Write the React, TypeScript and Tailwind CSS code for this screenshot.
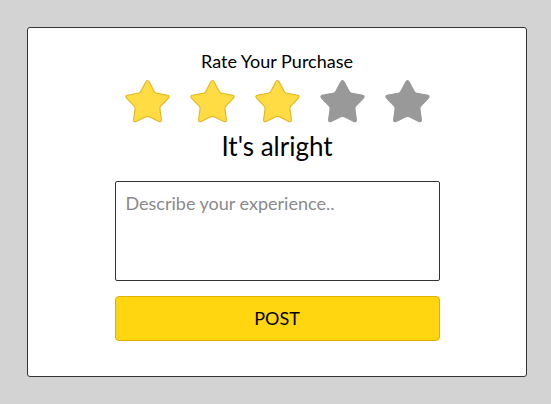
import React from "react";

function starPath(cx: number, cy: number, R: number, r: number, tOut: number, tIn: number) {
  const pts: [number, number][] = [];
  for (let i = 0; i < 10; i++) {
    const ang = -Math.PI / 2 + (i * Math.PI) / 5;
    const rad = i % 2 === 0 ? R : r;
    pts.push([cx + rad * Math.cos(ang), cy + rad * Math.sin(ang)]);
  }
  let d = "";
  for (let i = 0; i < 10; i++) {
    const v = pts[i];
    const p = pts[(i + 9) % 10];
    const n = pts[(i + 1) % 10];
    const t = i % 2 === 0 ? tOut : tIn;
    const a = [v[0] + (p[0] - v[0]) * t, v[1] + (p[1] - v[1]) * t];
    const b = [v[0] + (n[0] - v[0]) * t, v[1] + (n[1] - v[1]) * t];
    d += (i === 0 ? "M" : "L") + a[0].toFixed(2) + " " + a[1].toFixed(2) + " ";
    d += "Q" + v[0].toFixed(2) + " " + v[1].toFixed(2) + " " + b[0].toFixed(2) + " " + b[1].toFixed(2) + " ";
  }
  return d + "Z";
}

const D = starPath(22.5, 24.2, 24.5, 12.8, 0.25, 0.12);

function Star({ on }: { on: boolean }) {
  return (
    <svg width="45" height="43" viewBox="0 0 45 43" className="block overflow-visible">
      <path
        d={D}
        fill={on ? "#ffdb44" : "#999999"}
        stroke={on ? "#e2b61e" : "#999999"}
        strokeWidth={1.1}
        strokeLinejoin="round"
      />
    </svg>
  );
}

export default function App() {
  return (
    <div
      className="min-h-screen bg-[#d3d3d3] pt-[27px] pl-[27px]"
      style={{ fontFamily: "Lato, 'Noto Sans', sans-serif" }}
    >
      <div className="w-[500px] h-[350px] bg-white border border-[#333333] rounded-[3px] flex flex-col items-center pt-[22px]">
        <div className="text-[18px] leading-[22px] text-black">Rate Your Purchase</div>
        <div className="flex gap-[20px] mt-[7px]">
          {[0, 1, 2, 3, 4].map((i) => (
            <Star key={i} on={i < 3} />
          ))}
        </div>
        <div className="text-[26px] leading-[30px] text-black mt-[9px]">It's alright</div>
        <textarea
          placeholder="Describe your experience.."
          className="mt-[20px] w-[325px] h-[100px] border border-[#333333] rounded-[2px] px-[10px] py-[10px] text-[18px] leading-[22px] resize-none outline-none placeholder:text-[#8a8a8a] text-black"
          style={{ fontFamily: "Lato, sans-serif" }}
        />
        <button
          className="mt-[15px] w-[325px] h-[45px] bg-[#ffd60f] border border-[#e0b000] rounded-[4px] text-[18px] text-black flex items-center justify-center"
          style={{ fontFamily: "Lato, sans-serif" }}
        >
          POST
        </button>
      </div>
    </div>
  );
}
